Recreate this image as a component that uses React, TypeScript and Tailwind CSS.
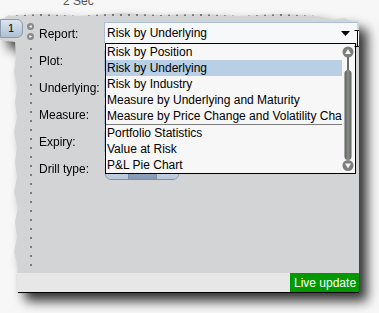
import React from "react";

const labels = ["Report:", "Plot:", "Underlying:", "Measure:", "Expiry:", "Drill type:"];
const riskItems = [
  "Risk by Position",
  "Risk by Underlying",
  "Risk by Industry",
  "Measure by Underlying and Maturity",
  "Measure by Price Change and Volatility Change",
];
const otherItems = ["Portfolio Statistics", "Value at Risk", "P&L Pie Chart"];

function RoundArrow({ dir }: { dir: "left" | "right" }) {
  return (
    <svg width="7" height="7" viewBox="0 0 7 7" className="block">
      <circle cx="3.5" cy="3.5" r="3.5" fill="#8a8a8a" />
      {dir === "left" ? (
        <path d="M2 3.5 L4.6 1.9 L4.6 5.1 Z" fill="#fff" />
      ) : (
        <path d="M5 3.5 L2.4 1.9 L2.4 5.1 Z" fill="#fff" />
      )}
    </svg>
  );
}

function ScrollBar() {
  return (
    <svg width="13" height="129" viewBox="0 0 13 129" className="block">
      <defs>
        <linearGradient id="thumb" x1="0" x2="1" y1="0" y2="0">
          <stop offset="0" stopColor="#5b5d5b" />
          <stop offset="0.5" stopColor="#8b8d8b" />
          <stop offset="1" stopColor="#5f615f" />
        </linearGradient>
      </defs>
      <circle cx="6" cy="8" r="5.5" fill="#7c7e7c" />
      <path d="M6 5 L9 10 L3 10 Z" fill="#f2f2f2" />
      <rect x="5" y="13" width="2" height="14" fill="#6a6c6a" />
      <rect x="2.5" y="26" width="7" height="90" rx="3.5" fill="url(#thumb)" />
      <circle cx="6" cy="121.5" r="5.5" fill="#7c7e7c" />
      <path d="M6 124.5 L9 119.5 L3 119.5 Z" fill="#f2f2f2" />
    </svg>
  );
}

function IBeam() {
  return (
    <svg width="7" height="17" viewBox="0 0 7 17" className="block">
      <path d="M0.5 0.5 H3.5 V16.5 M3.5 0.5 H6.5 M0.5 16.5 H6.5" stroke="#000" strokeWidth="1" fill="none" />
      <path d="M4.5 1.5 V15.5" stroke="#fff" strokeWidth="1" />
    </svg>
  );
}

function ReportCombo() {
  return (
    <div className="relative w-[253px] h-[21px]">
      <div className="h-full flex items-center bg-[#f7f8fa] border-t border-l border-[#a9bdd6] pl-[2px] pr-[2px]">
        <span className="flex-1 text-black">Risk by Underlying</span>
        <svg width="9" height="5" viewBox="0 0 9 5" className="block">
          <path d="M0 0 H9 L4.5 5 Z" fill="#000" />
        </svg>
        <div className="w-[5px]" />
      </div>
      <div className="absolute right-[-4px] top-[8px] z-20">
        <IBeam />
      </div>
      <div className="absolute left-[1px] top-full w-[251px] z-10 bg-[#f7f7f7] border border-black flex">
        <div className="w-[236px] flex flex-col">
          {riskItems.map((t) => (
            <div
              key={t}
              className={`h-[16px] flex items-center pl-[1px] whitespace-nowrap overflow-hidden ${
                t === "Risk by Underlying" ? "bg-[#b8cfe5]" : ""
              }`}
            >
              {t}
            </div>
          ))}
          <div className="h-[1px] bg-[#7d7d7d]" />
          {otherItems.map((t) => (
            <div key={t} className="h-[16px] flex items-center pl-[1px] whitespace-nowrap overflow-hidden">
              {t}
            </div>
          ))}
        </div>
        <div className="w-[13px]">
          <ScrollBar />
        </div>
      </div>
    </div>
  );
}

function DrillButtons() {
  return (
    <div className="flex h-[23px] w-[74px] rounded-[6px] overflow-hidden border border-[#7f90a6]">
      <div className="w-[23px] bg-[linear-gradient(#dfe7f0,#b7c7da)] border-r border-[#7f90a6]" />
      <div className="w-[28px] bg-[linear-gradient(#a9bbd0,#8299b5)] border-r border-[#7f90a6]" />
      <div className="flex-1 bg-[linear-gradient(#dfe7f0,#b7c7da)]" />
    </div>
  );
}

export default function App() {
  return (
    <div className="w-[379px] h-[313px] overflow-hidden bg-[#f7f7f7] font-['Liberation_Sans',Arial,sans-serif] text-[12px] text-black">
      <div className="h-[8px] overflow-hidden pl-[63px]">
        <div className="leading-[12px] -mt-[5px] text-[#555]">2 Sec</div>
      </div>
      <div className="mt-[4px] [filter:drop-shadow(8px_8px_6px_rgba(0,0,0,0.8))]">
        <div className="w-[359px] h-[281px] bg-[#d3d4d6] flex flex-col [clip-path:polygon(6px_4px,40px_2px,80px_4px,120px_1px,160px_3px,200px_2px,240px_4px,280px_2px,318px_4px,330px_8px,345px_6px,352px_10px,359px_9px,359px_281px,18px_281px,16px_268px,18px_255px,14px_240px,17px_225px,15px_210px,18px_195px,14px_180px,17px_165px,15px_150px,17px_135px,14px_120px,17px_105px,15px_90px,17px_75px,14px_60px,16px_45px,15px_30px,0px_28px,0px_7px,5px_6px)]">
          <div className="pt-[2px] pl-[8px]">
            <div className="h-[2px] w-[312px] bg-[repeating-linear-gradient(90deg,#7a7a7a_0_2px,transparent_2px_8px)]" />
          </div>
          <div className="flex-1 flex">
            <div className="w-[27px]">
              <div className="mt-[3px] w-[23px] h-[19px] rounded-r-[6px] border border-[#8d9bb0] bg-[linear-gradient(#dce5ef,#aebfd3)] flex items-center pl-[7px] text-[11px]">
                1
              </div>
            </div>
            <div className="w-[8px] flex flex-col">
              <div className="mt-[7px]">
                <RoundArrow dir="left" />
              </div>
              <div className="mt-[3px]">
                <RoundArrow dir="right" />
              </div>
              <div className="mt-[8px] ml-[3px] w-[2px] h-[218px] bg-[repeating-linear-gradient(180deg,#7a7a7a_0_2px,transparent_2px_9px)]" />
            </div>
            <div className="w-[69px] pl-[4px] pt-[4px] flex flex-col">
              {labels.map((l) => (
                <div key={l} className="h-[27px] flex items-center whitespace-nowrap">
                  {l}
                </div>
              ))}
            </div>
            <div className="pt-[4px] flex flex-col">
              <div className="h-[27px] pt-[2px]">
                <ReportCombo />
              </div>
              {[0, 1, 2, 3].map((i) => (
                <div key={i} className="h-[27px] flex items-center">
                  <div className="w-[120px] h-[20px] bg-[#f7f8fa] border border-[#a9bdd6]" />
                </div>
              ))}
              <div className="h-[27px] flex items-center pl-[1px]">
                <DrillButtons />
              </div>
            </div>
          </div>
          <div className="h-[20px] bg-[#e7e7e7] border-b border-black flex">
            <div className="ml-auto w-[69px] bg-[#009a00] text-white flex items-center pl-[4px]">Live update</div>
          </div>
        </div>
      </div>
    </div>
  );
}
